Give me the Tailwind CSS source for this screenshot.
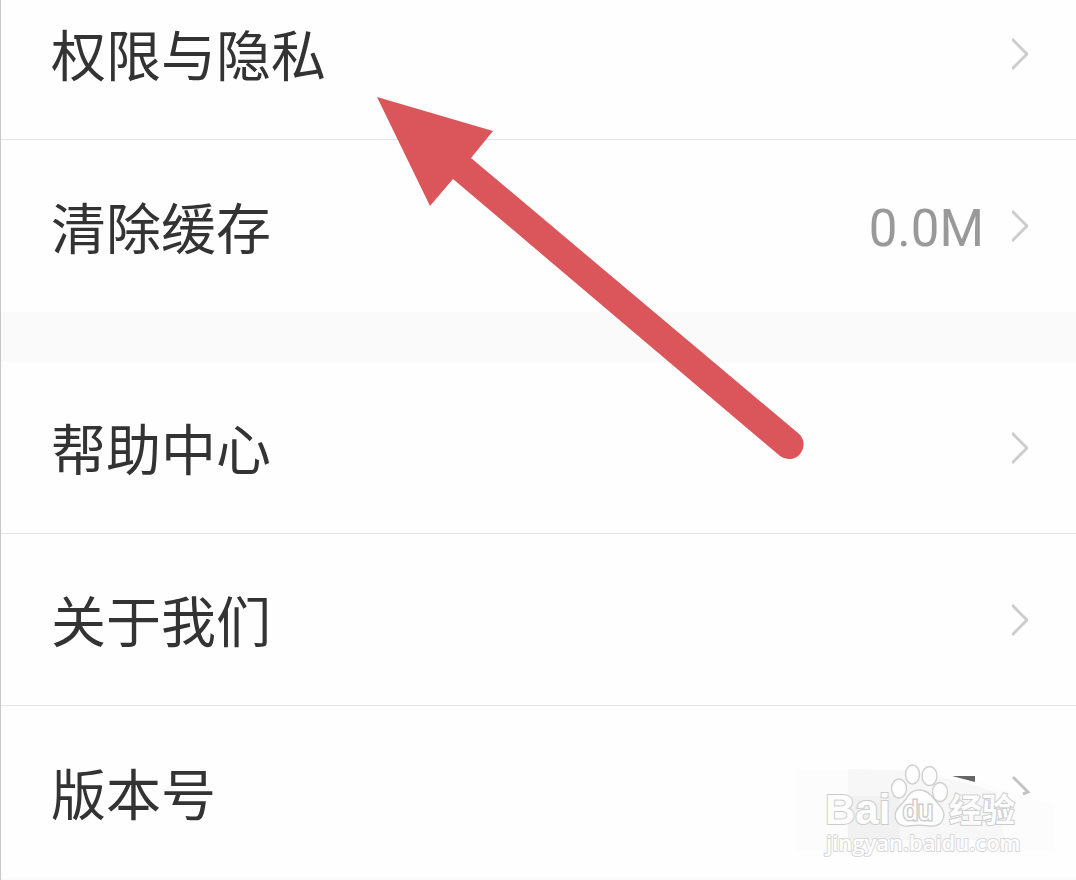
<!DOCTYPE html>
<html lang="zh-CN">
<head>
  <meta charset="UTF-8" />
  <meta name="viewport" content="width=device-width, initial-scale=1.0" />
  <title>设置</title>
  <script src="https://cdn.jsdelivr.net/npm/@tailwindcss/browser@4"></script>
</head>
<body class="bg-[#fafafa] font-['Roboto','Noto_Sans_CJK_SC',sans-serif] text-[55px] leading-none text-[#333333]">
  <div class="relative min-h-screen overflow-hidden border-l border-[#c8c8c8]">
    <!-- Settings list, scrolled a little past the first row -->
    <main class="-mt-8">
      <nav class="bg-[#fefefe]">
        <a href="#privacy" class="flex h-[172px] items-center justify-between border-b border-[#e5e5e5] pr-12 pl-[50px]">
          <span class="pt-2">权限与隐私</span>
          <svg class="h-8 w-4 fill-none stroke-[#cccccc]" viewBox="0 0 16 32" stroke-width="3"><path d="M0 1 L15 16 L0 31" /></svg>
        </a>
        <a href="#cache" class="flex h-[172px] items-center justify-between pr-12 pl-[50px]">
          <span class="pt-2">清除缓存</span>
          <span class="flex items-center gap-7">
            <span class="pt-1 text-[51px] text-[#999999]">0.0M</span>
            <svg class="h-8 w-4 fill-none stroke-[#cccccc]" viewBox="0 0 16 32" stroke-width="3"><path d="M0 1 L15 16 L0 31" /></svg>
          </span>
        </a>
      </nav>

      <nav class="mt-[50px] bg-[#fefefe]">
        <a href="#help" class="flex h-[172px] items-center justify-between border-b border-[#e5e5e5] pr-12 pl-[50px]">
          <span class="pt-2">帮助中心</span>
          <svg class="h-8 w-4 fill-none stroke-[#cccccc]" viewBox="0 0 16 32" stroke-width="3"><path d="M0 1 L15 16 L0 31" /></svg>
        </a>
        <a href="#about" class="flex h-[172px] items-center justify-between border-b border-[#e5e5e5] pr-12 pl-[50px]">
          <span class="pt-2">关于我们</span>
          <svg class="h-8 w-4 fill-none stroke-[#cccccc]" viewBox="0 0 16 32" stroke-width="3"><path d="M0 1 L15 16 L0 31" /></svg>
        </a>
        <a href="#version" class="relative flex h-[172px] items-center justify-between pr-12 pl-[50px]">
          <span class="pt-2">版本号</span>
          <!-- Smudged version number and watermark -->
          <svg class="absolute right-0 bottom-0 h-[128px] w-[296px]" viewBox="0 0 296 128" aria-label="Baidu 经验">
            <path d="M16 19 L130 19 L204 34 L250 48 L275 56 V101 H16Z" fill="#fcfcfc" />
            <path d="M68 19 L130 21 L190 34 L215 42 L225 90 H68Z" fill="#f7f7f7" />
            <path d="M68 46 H120 V90 H68Z" fill="#f1f1f1" />
            <path d="M172 26 H195 V32Z" fill="#666666" />
            <path d="M233 27 L248 42 L243 44" fill="none" stroke="#c4c4c4" stroke-width="3" />
            <g fill="#fefefe" stroke="#d0d0d0" stroke-width="1.4">
              <ellipse cx="119" cy="38.5" rx="7.5" ry="9.5" />
              <ellipse cx="132.5" cy="24.5" rx="7" ry="9.5" />
              <ellipse cx="149.5" cy="26" rx="7.5" ry="9.5" />
              <ellipse cx="160" cy="42" rx="7.5" ry="9.5" />
              <path d="M139 40 C132 40 129 44 126 49 C121 55 115 59 115 66 C116 73 121 77 128 76 C135 75 143 75 150 76 C158 77 163 73 164 65 C164 58 158 54 154 49 C150 43 146 40 139 40Z" />
            </g>
            <g fill="#fefefe" stroke="#cccccc" stroke-width="2" paint-order="stroke">
              <text x="45" y="74" font-size="42" font-weight="700" font-family="Liberation Sans, sans-serif">Bai</text>
              <text x="123" y="70" font-size="27" stroke-width="3" font-family="Liberation Sans, sans-serif">du</text>
              <text x="169" y="72" font-size="33" font-weight="700" font-family="Noto Sans CJK SC, sans-serif">经验</text>
              <text x="46" y="101" font-size="22" font-weight="600" stroke="#d8d8d8" font-family="Open Sans, sans-serif">jingyan.baidu.com</text>
            </g>
          </svg>
        </a>
      </nav>
    </main>

    <!-- Arrow pointing at the first row -->
    <svg class="pointer-events-none absolute top-[96px] left-[375px] h-[366px] w-[430px]" viewBox="376 96 430 366" aria-hidden="true">
      <path d="M377 97 L493 131 L471 158 L798 433 A14.5 14.5 0 0 1 780 456 L453 179 L430 206Z" fill="#db565b" />
    </svg>
  </div>
</body>
</html>
